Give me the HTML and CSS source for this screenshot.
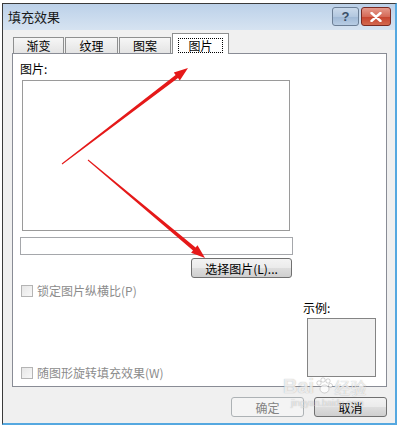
FILE: index.html
```html
<!DOCTYPE html>
<html lang="zh-CN">
<head>
    <meta charset="UTF-8">
    <title>填充效果</title>
    <link rel="stylesheet" href="styles.css">
</head>
<body>
    <div class="window">
        <div class="titlebar">
            <span class="title">填充效果</span>
            <div class="caption-btns">
                <span class="cap help">?</span>
                <span class="cap close">
                    <svg width="12" height="10" viewBox="0 0 12 10">
                        <path d="M1.5 1 L10.5 9 M10.5 1 L1.5 9" stroke="#fff" stroke-width="2.4" stroke-linecap="round"/>
                    </svg>
                </span>
            </div>
        </div>
        <div class="client">
            <!-- Onglets -->
            <div class="tabs">
                <div class="tab w1">渐变</div>
                <div class="tab w2">纹理</div>
                <div class="tab w3">图案</div>
                <div class="tab active"><span class="focus">图片</span></div>
            </div>
            <div class="panel">
                <div class="col-left">
                    <div class="label">图片:</div>
                    <div class="picture"></div>
                    <div class="field"></div>
                    <button class="btn pick">选择图片(L)...</button>
                    <div class="check disabled"><span class="box"></span>锁定图片纵横比(P)</div>
                    <div class="check disabled last"><span class="box"></span>随图形旋转填充效果(W)</div>
                </div>
                <div class="col-right">
                    <div class="label">示例:</div>
                    <div class="sample"></div>
                </div>
            </div>
            <div class="actions">
                <button class="btn action disabled">确定</button>
                <button class="btn action">取消</button>
            </div>
        </div>
    </div>

    <!-- Flèches d'annotation -->
    <svg class="arrows" width="401" height="427" viewBox="0 0 401 427">
        <polygon points="61.7,163.6 175.6,74.9 173.8,72.5 188,68 179.8,80.5 178.0,78.1 62.3,164.4" fill="#e51919"/>
        <polygon points="88.3,159.6 195.6,247.5 197.5,245.2 205,258 191.1,252.8 193.0,250.5 87.7,160.4" fill="#e51919"/>
    </svg>

    <!-- Filigrane -->
    <div class="watermark">
        <div class="wm-top">
            <span class="wm-bai">Bai</span>
            <svg class="wm-paw" width="18" height="18" viewBox="0 0 18 18">
                <circle cx="4" cy="6" r="2.2"/>
                <circle cx="8" cy="3" r="2.2"/>
                <circle cx="13" cy="4" r="2.2"/>
                <circle cx="15.5" cy="8.5" r="2"/>
                <ellipse cx="9.5" cy="12" rx="4.5" ry="4"/>
            </svg>
            <span class="wm-jy">经验</span>
        </div>
        <div class="wm-url">jingyan.baidu.com</div>
    </div>
</body>
</html>
```
FILE: styles.css
```css
* {
    box-sizing: border-box;
}
html, body {
    margin: 0;
    padding: 0;
}
body {
    width: 401px;
    height: 427px;
    overflow: hidden;
    position: relative;
    background: #fff;
    font-family: "Noto Sans CJK SC", "Liberation Sans", sans-serif;
    font-size: 12px;
    color: #000;
}
.window {
    margin: 3px 0 0 2px;
    width: 395px;
    height: 422px;
    border-left: 1px solid #3b3b3b;
    border-top: 1px solid #3b3b3b;
    border-right: 2px solid #55a8e0;
    border-bottom: 2px solid #55a8e0;
    background: #f0f0f0;
    display: flex;
    flex-direction: column;
}
.titlebar {
    height: 26px;
    display: flex;
    justify-content: space-between;
    align-items: flex-start;
    padding: 3px 4px 0 5px;
    background: linear-gradient(#bcd1e9, #d6e3f1);
}
.title {
    margin-top: 2px;
    font-size: 13px;
    line-height: 16px;
    color: #1a1a1a;
}
.caption-btns {
    display: flex;
    gap: 2px;
}
.cap {
    height: 19px;
    border: 1px solid #6c7f96;
    border-radius: 3px;
    display: flex;
    align-items: center;
    justify-content: center;
}
.help {
    width: 27px;
    background: linear-gradient(#cbdaeb 0%, #b3c8e0 50%, #9fb8d5 51%, #b8cde4 100%);
    font-family: "Liberation Sans", sans-serif;
    font-size: 13px;
    font-weight: bold;
    color: #3b4f68;
}
.close {
    width: 30px;
    border-color: #7a2a22;
    background: linear-gradient(#e59a8c 0%, #d56a58 50%, #c6422e 51%, #d3694f 100%);
}
.client {
    flex: 1;
    padding: 3px 8px 0 9px;
}
.tabs {
    display: flex;
    align-items: flex-end;
    gap: 1px;
    height: 21px;
    margin-left: 1px;
    margin-bottom: -1px;
    position: relative;
    z-index: 1;
}
.tab {
    height: 16px;
    margin-bottom: 1px;
    border: 1px solid #8e8f8f;
    border-bottom: none;
    background: linear-gradient(#f6f6f6, #e4e4e4);
    display: flex;
    align-items: center;
    justify-content: center;
    line-height: 14px;
}
.w1 { width: 51px; }
.w2 { width: 53px; }
.w3 { width: 52px; }
.tab.active {
    width: 57px;
    height: 21px;
    margin-bottom: 0;
    background: #fff;
    align-items: flex-start;
    padding-top: 4px;
}
.focus {
    width: 45px;
    height: 15px;
    border: 1px dotted #000;
    text-align: center;
    line-height: 13px;
}
.panel {
    height: 334px;
    border: 1px solid #898c95;
    background: #fff;
    display: flex;
    gap: 10px;
    padding: 8px 9px 6px 7px;
}
.col-left {
    width: 273px;
    display: flex;
    flex-direction: column;
}
.col-right {
    flex: 1;
    display: flex;
    flex-direction: column;
    justify-content: flex-end;
}
.label {
    line-height: 14px;
    height: 14px;
}
.picture {
    margin: 4px 0 0 2px;
    width: 268px;
    height: 151px;
    border: 1px solid #9a9a9a;
}
.field {
    margin-top: 6px;
    width: 273px;
    height: 18px;
    border: 1px solid #a5a7ab;
}
.btn {
    font: inherit;
    height: 20px;
    padding: 0;
    border: 1px solid #707070;
    border-radius: 3px;
    background: linear-gradient(#f3f3f3 0%, #ebebeb 48%, #dddddd 52%, #cfcfcf 100%);
    color: #000;
    line-height: 17px;
}
.pick {
    margin-top: 3px;
    width: 101px;
    align-self: flex-end;
    margin-right: 1px;
}
.check {
    display: flex;
    align-items: center;
    gap: 4px;
    height: 14px;
    line-height: 14px;
    margin-top: 6px;
    margin-left: 1px;
}
.check.last {
    margin-top: auto;
}
.check.disabled {
    color: #8c8c8c;
}
.box {
    width: 12px;
    height: 12px;
    border: 1px solid #b4b4b4;
    background: linear-gradient(135deg, #e6e6e6, #f8f8f8);
}
.col-right .label {
    margin-bottom: 3px;
}
.sample {
    margin: 0 0 3px 4px;
    width: 69px;
    height: 59px;
    border: 1px solid #848484;
    background: #f0f0f0;
}
.actions {
    display: flex;
    justify-content: flex-end;
    gap: 10px;
    margin-top: 10px;
}
.action {
    width: 73px;
}
.btn.disabled {
    border-color: #adb2b5;
    background: #f4f4f4;
    color: #838383;
}
.arrows {
    position: absolute;
    top: 0;
    left: 0;
    pointer-events: none;
}
.watermark {
    position: absolute;
    left: 283px;
    top: 376px;
    pointer-events: none;
    color: rgba(255,255,255,0.75);
    text-shadow: 0 0 1px rgba(110,110,110,0.55);
}
.wm-top {
    display: flex;
    align-items: flex-end;
}
.wm-bai {
    font-family: "Liberation Sans", sans-serif;
    font-weight: bold;
    font-size: 20px;
    line-height: 20px;
}
.wm-paw {
    fill: rgba(255,255,255,0.75);
    stroke: rgba(120,120,120,0.45);
    stroke-width: 0.7;
    margin: 0 1px 1px 1px;
}
.wm-jy {
    font-size: 16px;
    line-height: 18px;
}
.wm-url {
    font-family: "Liberation Sans", sans-serif;
    font-size: 9px;
    line-height: 10px;
    margin: 2px 0 0 8px;
    color: rgba(255,255,255,0.6);
}
```
